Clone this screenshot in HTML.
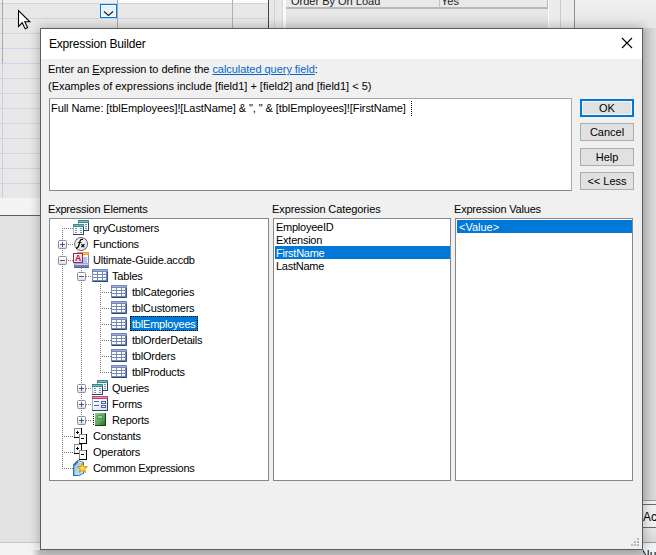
<!DOCTYPE html>
<html><head><meta charset="utf-8">
<style>
*{margin:0;padding:0;box-sizing:border-box}
html,body{width:656px;height:555px;overflow:hidden}
body{position:relative;background:#e6e6e6;font-family:"Liberation Sans",sans-serif;font-size:11px;color:#000}
.a{position:absolute}
.t{position:absolute;white-space:pre;line-height:13px}
.btn{position:absolute;left:580px;width:54px;height:18px;border:1px solid #adadad;background:#e1e1e1;text-align:center;line-height:16px}
.lb{position:absolute;background:#fff;border:1px solid #828790}
.sel{background:#0078d7;color:#fff}
.tr{letter-spacing:-0.2px}
</style></head><body>
<!-- ===== background ===== -->
<div class="a" style="left:0;top:0;width:268px;height:198px;background:#e8e8e8"></div>
<div class="a" style="left:0;top:0;width:117px;height:3px;background:#efefef"></div><div class="a" style="left:117px;top:0;width:151px;height:3px;background:#fbfbfb"></div>
<svg class="a" style="left:0;top:0" width="268" height="198" shape-rendering="crispEdges">
  <g fill="#cdd5e6">
    <rect x="0" y="3" width="268" height="1"/><rect x="0" y="18" width="268" height="1"/><rect x="0" y="33" width="268" height="1"/>
    <rect x="0" y="48" width="268" height="1"/><rect x="0" y="63" width="268" height="1"/><rect x="0" y="78" width="268" height="1"/>
    <rect x="0" y="93" width="268" height="1"/><rect x="0" y="108" width="268" height="1"/><rect x="0" y="123" width="268" height="1"/>
    <rect x="0" y="138" width="268" height="1"/><rect x="0" y="153" width="268" height="1"/><rect x="0" y="168" width="268" height="1"/>
    <rect x="0" y="183" width="268" height="1"/>
  </g>
  <rect x="2" y="0" width="1" height="198" fill="#c9d0df"/><rect x="2" y="0" width="1" height="63" fill="#a9a9a9"/>
  <rect x="117" y="0" width="1" height="198" fill="#a9a9a9"/>
  <rect x="232" y="0" width="1" height="198" fill="#b0b0b0"/>
</svg>
<!-- dropdown -->
<div class="a" style="left:100px;top:4px;width:17px;height:14px;border:1px solid #0078d7;box-shadow:inset 0 0 0 1px #f4f9fd;background:#e5f1fb"></div>
<svg class="a" style="left:100px;top:4px" width="17" height="14"><path d="M4 7.5 L8.5 11.5 L13 7.5" fill="none" stroke="#222" stroke-width="1.2"/></svg>
<!-- cursor -->
<svg class="a" style="left:17px;top:9px" width="16" height="22"><path d="M1.5 1.5 L1.5 17.5 L5.2 13.8 L8.2 19.8 L10.6 18.6 L7.8 12.8 L12.8 12.8 Z" fill="#fff" stroke="#000" stroke-width="1.1" stroke-linejoin="miter"/></svg>
<!-- band below grid -->
<div class="a" style="left:0;top:198px;width:268px;height:17px;background:#f4f4f4"></div>
<div class="a" style="left:0;top:215px;width:268px;height:1px;background:#606060"></div>
<div class="a" style="left:0;top:216px;width:268px;height:326px;background:#e3e3e3"></div>
<div class="a" style="left:0;top:542px;width:656px;height:1px;background:#c8c8c8"></div>
<div class="a" style="left:0;top:543px;width:656px;height:12px;background:#f3f3f3"></div>
<!-- top right property sheet -->
<div class="a" style="left:268px;top:0;width:1px;height:28px;background:#444"></div>
<div class="a" style="left:269px;top:0;width:17px;height:28px;background:#e8e8e8"></div>
<div class="a" style="left:274px;top:0;width:1px;height:28px;background:#d2d2d2"></div>
<div class="a" style="left:282px;top:0;width:1px;height:28px;background:#d6d6d6"></div>
<div class="a" style="left:283px;top:0;width:3px;height:28px;background:#fafafa"></div>
<div class="a" style="left:286px;top:0;width:262px;height:9px;background:#e9e9e9;border-bottom:2px solid #b8b8b8;border-right:1px solid #b8b8b8"></div>
<div class="a" style="left:439px;top:0;width:1px;height:8px;background:#c4c4c4"></div>
<div class="t" style="left:291px;top:-5px;color:#222">Order By On Load</div>
<div class="t" style="left:441px;top:-5px;color:#222">Yes</div>
<div class="a" style="left:286px;top:9px;width:262px;height:19px;background:linear-gradient(#e9e9e9,#dedede)"></div>
<div class="a" style="left:548px;top:0;width:27px;height:28px;background:#ececec"></div>
<div class="a" style="left:548px;top:0;width:1px;height:28px;background:#fbfbfb"></div>
<div class="a" style="left:560px;top:0;width:1px;height:28px;background:#cacaca"></div>
<div class="a" style="left:574px;top:0;width:1px;height:28px;background:#8e8e8e"></div>
<div class="a" style="left:575px;top:0;width:81px;height:28px;background:linear-gradient(#efefef,#e6e6e6)"></div>
<!-- right strip -->
<div class="a" style="left:643px;top:28px;width:13px;height:472px;background:linear-gradient(90deg,#c9c9c9,#dcdcdc)"></div>
<div class="a" style="left:643px;top:500px;width:13px;height:1px;background:#9a9a9a"></div>
<div class="a" style="left:643px;top:501px;width:13px;height:3px;background:#f2f2f2"></div>
<div class="a" style="left:643px;top:504px;width:13px;height:1px;background:#6a6a6a"></div>
<div class="a" style="left:643px;top:505px;width:13px;height:22px;background:#f0f0f0"></div>
<div class="t" style="left:643px;top:511px;font-size:12px">Ac</div>
<div class="a" style="left:643px;top:527px;width:13px;height:1px;background:#6a6a6a"></div>
<div class="a" style="left:643px;top:528px;width:13px;height:14px;background:linear-gradient(#e8e8e8,#d8d8d8)"></div>
<div class="a" style="left:643px;top:542px;width:13px;height:1px;background:#9a9a9a"></div>
<div class="t" style="left:641px;top:549px;font-size:12px">Nu</div>

<div class="a" style="left:32px;top:550px;width:611px;height:5px;background:linear-gradient(90deg,rgba(200,200,200,0),#c4c4c4 8px)"></div>
<!-- ===== dialog ===== -->
<div class="a" style="left:40px;top:28px;width:603px;height:522px;border:1px solid #5c5c5c;background:#f0f0f0;box-shadow:0 0 10px 1px rgba(0,0,0,.25)"></div>
<div class="a" style="left:41px;top:29px;width:601px;height:30px;background:#fff"></div>
<div class="t" style="left:49px;top:38px;font-size:12px;letter-spacing:-0.2px">Expression Builder</div>
<svg class="a" style="left:621px;top:37px" width="12" height="12"><path d="M1 1 L11 11 M11 1 L1 11" stroke="#000" stroke-width="1.1"/></svg>

<div class="t" style="left:48px;top:63px;letter-spacing:-0.04px">Enter an <u>E</u>xpression to define the <span style="color:#0066cc;text-decoration:underline">calculated query field</span>:</div>
<div class="t" style="left:48px;top:80px">(Examples of expressions include [field1] + [field2] and [field1] &lt; 5)</div>

<div class="lb" style="left:49px;top:98px;width:523px;height:93px;border-color:#a9a9a9 #a9a9a9 #828790 #828790"></div>
<div class="t" style="left:51px;top:102px;letter-spacing:-0.08px">Full Name: [tblEmployees]![LastName] &amp; ", " &amp; [tblEmployees]![FirstName]</div>
<div class="a" style="left:411px;top:101px;width:1px;height:16px;background:repeating-linear-gradient(#000 0 1px,transparent 1px 2px)"></div>

<div class="btn" style="top:99px;border:2px solid #0078d7;box-shadow:inset 0 0 0 1px #f7f3ef;line-height:14px">OK</div>
<div class="btn" style="top:123px">Cancel</div>
<div class="btn" style="top:148px">Help</div>
<div class="btn" style="top:172px">&lt;&lt; Less</div>

<div class="t" style="left:48px;top:203px;letter-spacing:-0.2px">Expression Elements</div>
<div class="t" style="left:272px;top:203px;letter-spacing:-0.1px">Expression Categories</div>
<div class="t" style="left:454px;top:203px;letter-spacing:-0.2px">Expression Values</div>

<div class="lb" style="left:49px;top:218px;width:220px;height:263px"></div>
<div class="lb" style="left:273px;top:218px;width:178px;height:263px"></div>
<div class="lb" style="left:455px;top:218px;width:178px;height:263px"></div>

<!-- categories -->
<div class="t" style="left:276px;top:221px;letter-spacing:-0.25px">EmployeeID</div>
<div class="t" style="left:276px;top:234px;letter-spacing:-0.25px">Extension</div>
<div class="a sel" style="left:275px;top:246px;width:175px;height:13px"></div>
<div class="t" style="left:276px;top:247px;color:#fff;letter-spacing:-0.25px">FirstName</div>
<div class="t" style="left:276px;top:260px;letter-spacing:-0.25px">LastName</div>
<!-- values -->
<div class="a sel" style="left:457px;top:220px;width:175px;height:13px"></div>
<div class="t" style="left:459px;top:221px;color:#fff">&lt;Value&gt;</div>

<!-- resize grip -->
<svg class="a" style="left:630px;top:538px" width="10" height="10" shape-rendering="crispEdges"><g fill="#b8b8b8">
<rect x="7" y="0" width="2" height="2"/><rect x="4" y="3" width="2" height="2"/><rect x="7" y="3" width="2" height="2"/>
<rect x="1" y="6" width="2" height="2"/><rect x="4" y="6" width="2" height="2"/><rect x="7" y="6" width="2" height="2"/></g></svg>

<!-- TREE -->
<svg class="a" style="left:0;top:0" width="268" height="481" viewBox="0 0 268 481" shape-rendering="crispEdges"><defs><pattern id="pe" width="2" height="2" patternUnits="userSpaceOnUse"><rect width="1" height="1" fill="#7a7a7a"/></pattern><pattern id="po" width="2" height="2" patternUnits="userSpaceOnUse"><rect x="1" width="1" height="1" fill="#7a7a7a"/></pattern>
<linearGradient id="expg" x1="0" y1="0" x2="0" y2="1"><stop offset="0" stop-color="#fff"/><stop offset="0.55" stop-color="#f6f6f6"/><stop offset="1" stop-color="#d8d8d8"/></linearGradient>
<g id="exp"><rect x="0.5" y="0.5" width="8" height="8" rx="1" fill="url(#expg)" stroke="#8e8e8e" shape-rendering="geometricPrecision"/></g>
<g id="tblsm">
 <rect x="0" y="0" width="11" height="11" fill="#2c4466"/>
 <rect x="0" y="0" width="10" height="10" fill="#a9b8cf"/>
 <rect x="0" y="0" width="11" height="3" fill="#3e8a88"/>
 <rect x="1" y="1" width="9" height="1" fill="#79bdb8"/>
 <rect x="1" y="3" width="9" height="7" fill="#f7faff"/>
 <rect x="2" y="4" width="2" height="1" fill="#7e8fae"/><rect x="7" y="4" width="2" height="1" fill="#7e8fae"/>
 <rect x="2" y="6" width="2" height="1" fill="#7e8fae"/><rect x="7" y="6" width="2" height="1" fill="#7e8fae"/>
 <rect x="2" y="8" width="2" height="1" fill="#7e8fae"/><rect x="7" y="8" width="2" height="1" fill="#7e8fae"/>
</g>
<g id="qry"><use href="#tblsm" x="5" y="0"/><use href="#tblsm" x="0" y="4"/></g>
<g id="tbl">
 <rect x="0" y="1" width="16" height="13" fill="#7489bb"/>
 <rect x="1" y="13" width="15" height="1" fill="#2f4470"/>
 <rect x="15" y="4" width="1" height="10" fill="#3b517e"/>
 <rect x="1" y="2" width="14" height="1" fill="#9db0d8"/>
 <g fill="#fff"><rect x="1" y="4" width="4" height="2"/><rect x="6" y="4" width="4" height="2"/><rect x="11" y="4" width="3" height="2"/>
 <rect x="1" y="7" width="4" height="2"/><rect x="6" y="7" width="4" height="2"/><rect x="11" y="7" width="3" height="2"/>
 <rect x="1" y="10" width="4" height="2"/><rect x="6" y="10" width="4" height="2"/><rect x="11" y="10" width="3" height="2"/></g>
 <g fill="#d3e0f8"><rect x="12" y="5" width="2" height="1"/><rect x="12" y="8" width="2" height="1"/><rect x="12" y="11" width="2" height="1"/></g>
</g>
<radialGradient id="fxg" cx="0.4" cy="0.35" r="0.7"><stop offset="0" stop-color="#fff"/><stop offset="1" stop-color="#dcdcdc"/></radialGradient>
<g id="fx" shape-rendering="geometricPrecision">
 <circle cx="8.1" cy="8" r="6.5" fill="url(#fxg)" stroke="#6a6a6a" stroke-width="1"/>
 <path d="M3 12.4 Q5.3 12 6.1 8.6 L6.9 5.2 Q7.7 2.9 10 3.5" fill="none" stroke="#000" stroke-width="1.25"/>
 <path d="M4.8 6.6 L8.6 6.6" fill="none" stroke="#000" stroke-width="0.9"/>
 <path d="M8.4 8.2 L11.2 11.2 M11.4 8.2 L8.4 11.2" fill="none" stroke="#000" stroke-width="1.2"/>
 <circle cx="3.6" cy="3.4" r="0.6" fill="#5b5bb5"/><circle cx="12.6" cy="3.4" r="0.6" fill="#5b5bb5"/><circle cx="12.6" cy="12.6" r="0.6" fill="#5b5bb5"/>
</g>
<linearGradient id="accg" x1="0" y1="0" x2="1" y2="1"><stop offset="0" stop-color="#fff"/><stop offset="1" stop-color="#f0c4d6"/></linearGradient>
<linearGradient id="accb" x1="0" y1="0" x2="0" y2="1"><stop offset="0" stop-color="#9fb4d6"/><stop offset="1" stop-color="#4a6696"/></linearGradient>
<g id="acc">
 <rect x="4" y="0" width="12" height="12" fill="#6d8cc0"/>
 <rect x="5" y="3" width="10" height="8" fill="#f2f6fc"/>
 <rect x="4" y="0" width="12" height="3" fill="#ee9a2c"/>
 <rect x="5" y="1" width="10" height="1" fill="#f8c468"/>
 <rect x="10" y="5" width="4" height="6" fill="#a8c8ec"/>
 <rect x="1" y="11" width="15" height="5" fill="url(#accb)"/>
 <rect x="2" y="12" width="13" height="1" fill="#c4d2ea"/>
 <rect x="0" y="1" width="10" height="10" fill="#a3245a"/>
 <rect x="1" y="2" width="8" height="8" fill="url(#accg)"/>
 <text x="5" y="9" text-anchor="middle" font-family="Liberation Sans" font-weight="bold" font-size="8.5" fill="#a81d4e" shape-rendering="geometricPrecision">A</text>
</g>
<linearGradient id="frmg" x1="0" y1="0" x2="1" y2="1"><stop offset="0" stop-color="#fff"/><stop offset="1" stop-color="#d6e2f6"/></linearGradient>
<g id="frm">
 <rect x="0" y="0" width="16" height="15" fill="#2d4168"/>
 <rect x="0" y="3" width="1" height="11" fill="#9eb0cc"/>
 <rect x="1" y="3" width="14" height="11" fill="url(#frmg)"/>
 <rect x="0" y="0" width="16" height="3" fill="#c8436f"/>
 <rect x="1" y="1" width="14" height="1" fill="#e48fae"/>
 <rect x="2" y="5" width="5" height="1" fill="#5068a0"/><rect x="2" y="9" width="5" height="1" fill="#5068a0"/>
 <rect x="9" y="5" width="5" height="3" fill="#4e6394"/><rect x="10" y="6" width="3" height="1" fill="#eef3fb"/>
 <rect x="9" y="9" width="5" height="3" fill="#4e6394"/><rect x="10" y="10" width="3" height="1" fill="#eef3fb"/>
</g>
<linearGradient id="rptg" x1="0" y1="0" x2="1" y2="1"><stop offset="0" stop-color="#8fd08f"/><stop offset="0.6" stop-color="#5aa65a"/><stop offset="1" stop-color="#2f6a2f"/></linearGradient>
<g id="rpt">
 <rect x="3" y="1" width="11" height="13" fill="#1d3d1d"/>
 <rect x="3" y="1" width="10" height="12" fill="url(#rptg)"/>
 <rect x="5" y="3" width="6" height="4" fill="#4e9a4e"/>
 <rect x="6" y="4" width="4" height="2" fill="#98d498"/>
 <g fill="#111"><rect x="1" y="2" width="1" height="1"/><rect x="1" y="4" width="1" height="1"/><rect x="1" y="6" width="1" height="1"/><rect x="1" y="8" width="1" height="1"/><rect x="1" y="10" width="1" height="1"/><rect x="1" y="12" width="1" height="1"/></g>
 <g fill="#fff"><rect x="2" y="2" width="1" height="1"/><rect x="2" y="4" width="1" height="1"/><rect x="2" y="6" width="1" height="1"/><rect x="2" y="8" width="1" height="1"/><rect x="2" y="10" width="1" height="1"/><rect x="2" y="12" width="1" height="1"/></g>
</g>
<g id="cst">
 <rect x="1" y="0" width="8" height="10" fill="#000"/>
 <rect x="1" y="0" width="7" height="9" fill="#8c8c8c"/>
 <rect x="2" y="1" width="6" height="8" fill="#fbfbfb"/>
 <rect x="3" y="4" width="3" height="1" fill="#000"/><rect x="4" y="3" width="1" height="3" fill="#000"/>
 <rect x="6" y="6" width="8" height="10" fill="#000"/>
 <rect x="6" y="6" width="7" height="9" fill="#8c8c8c"/>
 <rect x="7" y="7" width="6" height="8" fill="#fbfbfb"/>
 <rect x="8" y="10" width="3" height="1" fill="#000"/>
</g>
<linearGradient id="bookg" x1="0" y1="0" x2="1" y2="1"><stop offset="0" stop-color="#8cc2ea"/><stop offset="1" stop-color="#d4ecfb"/></linearGradient>
<radialGradient id="starg" cx="0.5" cy="0.55" r="0.5"><stop offset="0" stop-color="#ffe860"/><stop offset="1" stop-color="#f3b300"/></radialGradient>
<g id="cmn" shape-rendering="geometricPrecision">
 <path d="M0 4.5 L4.7 0 L11 2 L11 13.5 L6 16 L0 16 Z" fill="#2f6fa8"/>
 <path d="M2 5.5 L5.2 2.2 L10 3.4 L10 13 L5.8 15 L2 15 Z" fill="url(#bookg)"/>
 <path d="M1 5.2 L2 5.5 L2 15 L1 15 Z" fill="#7db7e4"/>
 <path d="M4.8 1 L10.4 2.7 L9.8 3.4 L5.2 2.3 Z" fill="#fff"/>
 <path d="M9.40 3.00 L10.75 6.44 L14.44 6.66 L11.59 9.01 L12.52 12.59 L9.40 10.60 L6.28 12.59 L7.21 9.01 L4.36 6.66 L8.05 6.44 Z" fill="url(#starg)" stroke="#dc8c00" stroke-width="0.9" stroke-linejoin="round"/>
</g>
</defs><g><rect x="62" y="228" width="1" height="241" fill="url(#pe)"/><rect x="81" y="268" width="1" height="153" fill="url(#po)"/><rect x="100" y="284" width="1" height="89" fill="url(#pe)"/><rect x="62" y="228" width="11" height="1" fill="url(#pe)"/><rect x="62" y="244" width="11" height="1" fill="url(#pe)"/><rect x="62" y="260" width="11" height="1" fill="url(#pe)"/><rect x="81" y="276" width="11" height="1" fill="url(#pe)"/><rect x="100" y="292" width="11" height="1" fill="url(#pe)"/><rect x="100" y="308" width="11" height="1" fill="url(#pe)"/><rect x="100" y="324" width="11" height="1" fill="url(#pe)"/><rect x="100" y="340" width="11" height="1" fill="url(#pe)"/><rect x="100" y="356" width="11" height="1" fill="url(#pe)"/><rect x="100" y="372" width="11" height="1" fill="url(#pe)"/><rect x="81" y="388" width="11" height="1" fill="url(#pe)"/><rect x="81" y="404" width="11" height="1" fill="url(#pe)"/><rect x="81" y="420" width="11" height="1" fill="url(#pe)"/><rect x="62" y="436" width="11" height="1" fill="url(#pe)"/><rect x="62" y="452" width="11" height="1" fill="url(#pe)"/><rect x="62" y="468" width="11" height="1" fill="url(#pe)"/></g><use href="#exp" x="58" y="240"/><rect x="60" y="244" width="5" height="1" fill="#3a559c"/><rect x="62" y="242" width="1" height="5" fill="#3a559c"/><use href="#exp" x="58" y="256"/><rect x="60" y="260" width="5" height="1" fill="#3a559c"/><use href="#exp" x="77" y="272"/><rect x="79" y="276" width="5" height="1" fill="#3a559c"/><use href="#exp" x="77" y="384"/><rect x="79" y="388" width="5" height="1" fill="#3a559c"/><rect x="81" y="386" width="1" height="5" fill="#3a559c"/><use href="#exp" x="77" y="400"/><rect x="79" y="404" width="5" height="1" fill="#3a559c"/><rect x="81" y="402" width="1" height="5" fill="#3a559c"/><use href="#exp" x="77" y="416"/><rect x="79" y="420" width="5" height="1" fill="#3a559c"/><rect x="81" y="418" width="1" height="5" fill="#3a559c"/><use href="#qry" x="73" y="220"/><use href="#fx" x="73" y="236"/><use href="#acc" x="73" y="252"/><use href="#tbl" x="92" y="268"/><use href="#tbl" x="111" y="284"/><use href="#tbl" x="111" y="300"/><use href="#tbl" x="111" y="316"/><use href="#tbl" x="111" y="332"/><use href="#tbl" x="111" y="348"/><use href="#tbl" x="111" y="364"/><use href="#qry" x="92" y="380"/><use href="#frm" x="92" y="396"/><use href="#rpt" x="92" y="412"/><use href="#cst" x="73" y="428"/><use href="#cst" x="73" y="444"/><use href="#cmn" x="73" y="460"/></svg>
<div class="t tr" style="left:93px;top:222px">qryCustomers</div>
<div class="t tr" style="left:93px;top:238px">Functions</div>
<div class="t tr" style="left:93px;top:254px">Ultimate-Guide.accdb</div>
<div class="t tr" style="left:112px;top:270px">Tables</div>
<div class="t tr" style="left:132px;top:286px">tblCategories</div>
<div class="t tr" style="left:132px;top:302px">tblCustomers</div>
<div class="a" style="left:130px;top:316px;width:68px;height:15px;background:#0078d7;outline:1px dotted #000;outline-offset:-1px"></div>
<div class="t tr" style="left:132px;top:318px;color:#fff">tblEmployees</div>
<div class="t tr" style="left:132px;top:334px">tblOrderDetails</div>
<div class="t tr" style="left:132px;top:350px">tblOrders</div>
<div class="t tr" style="left:132px;top:366px">tblProducts</div>
<div class="t tr" style="left:112px;top:382px">Queries</div>
<div class="t tr" style="left:112px;top:398px">Forms</div>
<div class="t tr" style="left:112px;top:414px">Reports</div>
<div class="t tr" style="left:93px;top:430px">Constants</div>
<div class="t tr" style="left:93px;top:446px">Operators</div>
<div class="t tr" style="left:93px;top:462px;letter-spacing:-0.35px">Common Expressions</div>
<!-- /TREE -->
</body></html>
